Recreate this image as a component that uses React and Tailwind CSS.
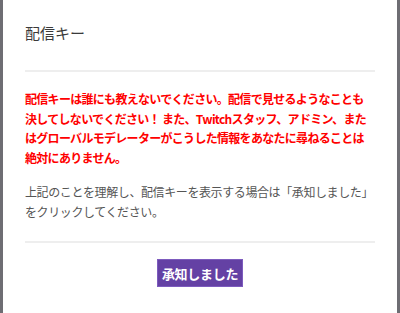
export default function App() {
  const font = { fontFamily: '"Noto Sans CJK JP", "Noto Sans", sans-serif' };
  return (
    <div className="w-[400px] h-[313px] bg-[#6e6d73] flex px-[3px] overflow-hidden" style={font}>
      <div className="flex-1 bg-white px-[22px] flex flex-col">
        <div className="h-[70px] flex items-center pb-[6px]">
          <h1 className="text-[15px] text-[#3a3a3a] leading-none">配信キー</h1>
        </div>
        <div className="h-[2px] bg-[#eeeeee]" />
        <p className="mt-[17px] w-[346px] text-[12px] leading-[19.5px] font-bold tracking-[-0.7px] text-[#ff0000]">
          配信キーは誰にも教えないでください。配信で見せるようなことも決してしないでください！ また、Twitchスタッフ、アドミン、またはグローバルモデレーターがこうした情報をあなたに尋ねることは絶対にありません。
        </p>
        <p className="mt-[15px] text-[12px] leading-[20px] tracking-[-0.4px] text-[#555555]">
          上記のことを理解し、配信キーを表示する場合は「承知しました」をクリックしてください。
        </p>
        <div className="mt-[19px] h-[2px] bg-[#eeeeee]" />
        <div className="mt-[16px] flex justify-center">
          <button className="h-[28px] w-[86px] bg-[#6441a4] border border-[#7d5bbe] text-white text-[13px] font-bold leading-none tracking-[-0.3px]">
            承知しました
          </button>
        </div>
      </div>
    </div>
  );
}
